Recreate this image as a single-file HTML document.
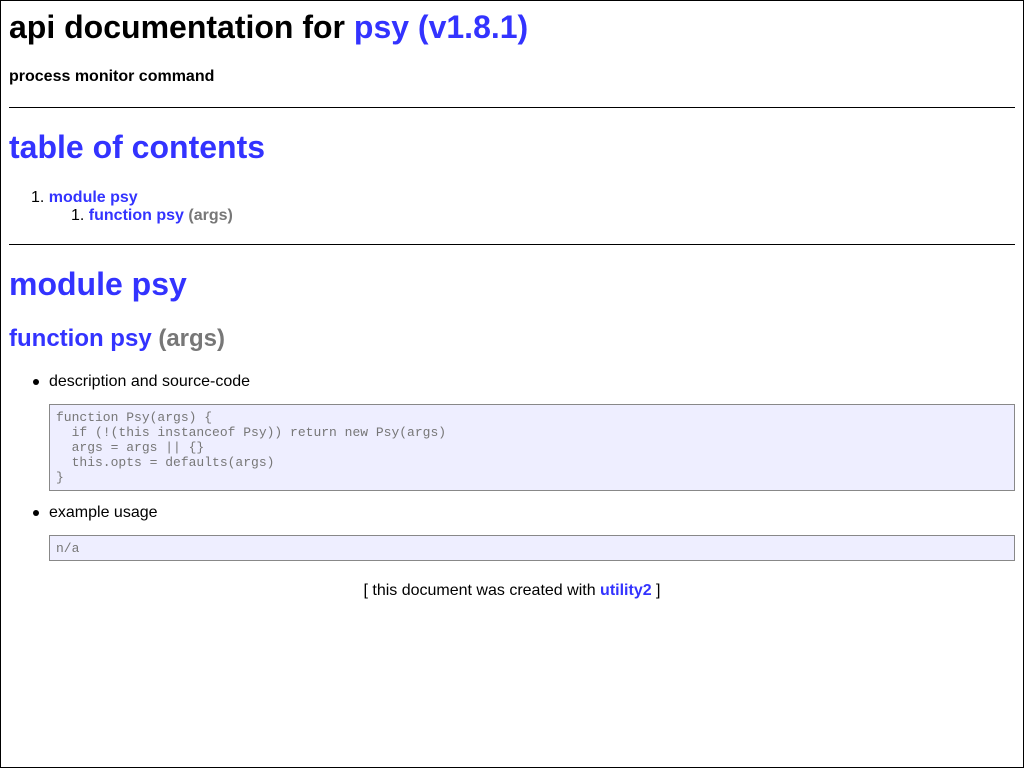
<!DOCTYPE html>
<html><head><style>
html,body{margin:0;padding:0}
body{width:1022px;height:766px;border:1px solid #000;position:relative;font-family:"Liberation Sans",Arial,sans-serif;color:#000;overflow:hidden}
.a{position:absolute;white-space:nowrap}
.b{color:#33f;font-weight:bold}
.g{color:#777;font-weight:bold}
hr{position:absolute;left:8px;width:1006px;margin:0;border:0;border-top:1px solid #000;height:0}
pre{position:absolute;left:48px;width:952px;margin:0;padding:5px 6px;background:#eef;border:1px solid #888;font-family:"Liberation Mono",monospace;font-size:13px;line-height:15px;color:#777}
.dot{position:absolute;width:6px;height:6px;border-radius:50%;background:#000}
</style></head><body>
<div class="a" style="left:8px;top:8px;font-size:32px;font-weight:bold;line-height:37px">api documentation for <span class="b">psy (v1.8.1)</span></div>
<div class="a" style="left:8px;top:67px;font-size:16px;font-weight:bold">process monitor command</div>
<hr style="top:106px">
<div class="a b" style="left:8px;top:128px;font-size:32px;line-height:37px">table of contents</div>
<div class="a" style="left:30px;top:188px;font-size:16px">1. <span class="b">module psy</span></div>
<div class="a" style="left:70px;top:206px;font-size:16px">1. <span class="b">function psy</span> <span class="g">(args)</span></div>
<hr style="top:243px">
<div class="a b" style="left:8px;top:265px;font-size:32px;line-height:37px">module psy</div>
<div class="a" style="left:8px;top:324px;font-size:24px;line-height:28px"><span class="b">function psy</span> <span class="g">(args)</span></div>
<div class="dot" style="left:32px;top:378px"></div>
<div class="a" style="left:48px;top:372px;font-size:16px">description and source-code</div>
<pre style="top:403px;left:48px">function Psy(args) {
  if (!(this instanceof Psy)) return new Psy(args)
  args = args || {}
  this.opts = defaults(args)
}</pre>
<div class="dot" style="left:32px;top:509px"></div>
<div class="a" style="left:48px;top:503px;font-size:16px">example usage</div>
<pre style="top:534px;padding:5px 6px 4px">n/a</pre>
<div class="a" style="left:0;width:1022px;text-align:center;top:581px;font-size:16px">[ this document was created with <span class="b">utility2</span> ]</div>
</body></html>
